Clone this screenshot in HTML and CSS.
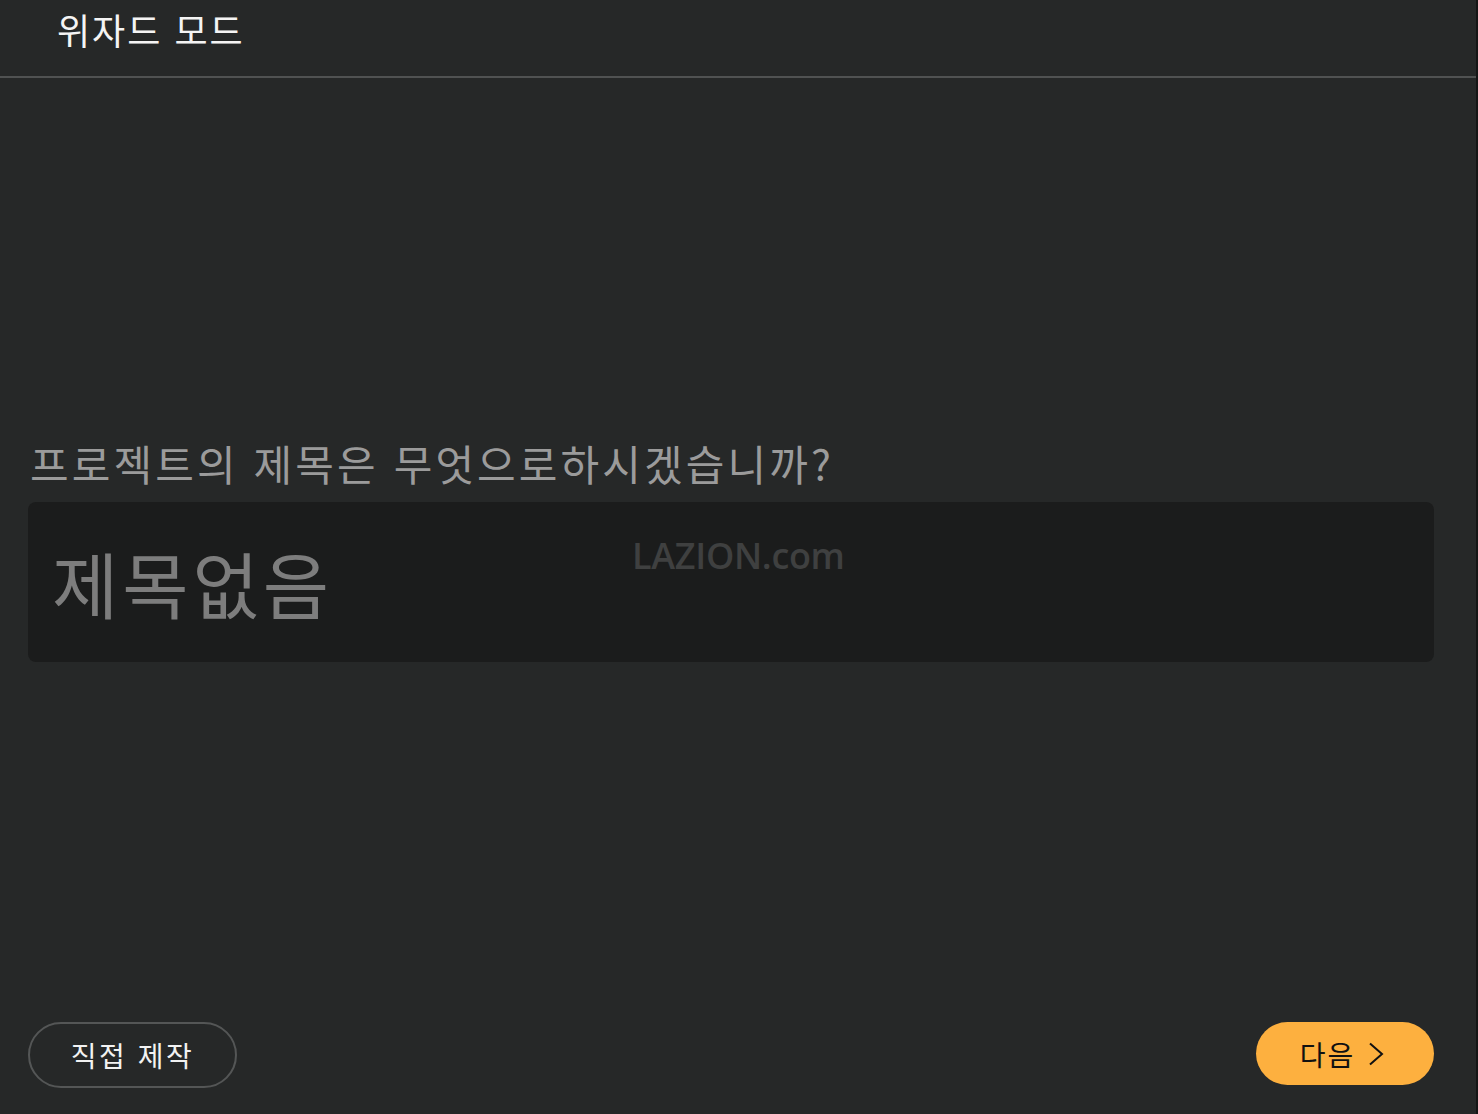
FILE: index.html
```html
<!DOCTYPE html>
<html lang="ko">
<head>
<meta charset="utf-8">
<title>위자드 모드</title>
<link rel="stylesheet" href="styles.css">
</head>
<body>
<div class="app">
  <header class="header">
    <h1 class="title">위자드 모드</h1>
  </header>
  <main class="main">
    <label class="question" for="project-title">프로젝트의 제목은 무엇으로하시겠습니까?</label>
    <div class="field">
      <span class="field-text" id="project-title">제목없음</span>
      <span class="watermark">LAZION<span class="wm-dot">.</span>com</span>
    </div>
  </main>
  <footer class="footer">
    <button class="btn btn-outline">직접 제작</button>
    <button class="btn btn-primary">다음
      <svg class="chev" width="16" height="24" viewBox="0 0 16 24"><path d="M2 1.5 L14 12 L2 22.5" fill="none" stroke="#111" stroke-width="2"/></svg>
    </button>
  </footer>
</div>
</body>
</html>
```
FILE: styles.css
```css
html, body {
  margin: 0;
  padding: 0;
  background: #262828;
  height: 100%;
}
body {
  font-family: "Noto Sans CJK KR", "Noto Sans", sans-serif;
  overflow: hidden;
}
.app {
  height: 1114px;
  width: 1478px;
  display: flex;
  flex-direction: column;
  border-right: 2px solid #151616;
  box-sizing: border-box;
}
.header {
  height: 76px;
  border-bottom: 2px solid #505252;
  box-sizing: content-box;
  padding-left: 57px;
  display: flex;
  align-items: flex-start;
}
.title {
  margin: 0;
  margin-top: 5px;
  font-size: 36px;
  font-weight: 400;
  color: #f4f4f4;
  line-height: 48px;
  letter-spacing: 2px;
}
.main {
  flex: 1;
  display: flex;
  flex-direction: column;
  padding: 0 42px 0 28px;
  padding-top: 355px;
}
.question {
  font-size: 42px;
  color: #9b9b9b;
  line-height: 60px;
  margin-left: 2px;
  margin-bottom: 9px;
  letter-spacing: 3.1px;
}
.field {
  position: relative;
  height: 160px;
  background: #1b1c1c;
  border-radius: 8px;
  display: flex;
  align-items: flex-start;
  padding-left: 24px;
}
.field-text {
  font-size: 72px;
  color: #7d7d7d;
  line-height: 84px;
  margin-top: 38px;
  letter-spacing: 4px;
}
.watermark {
  position: absolute;
  left: 604px;
  top: 29px;
  font-family: "Open Sans", "Noto Sans", sans-serif;
  font-weight: 600;
  font-size: 36px;
  color: #3f4040;
  letter-spacing: -0.3px;
}
.footer {
  display: flex;
  justify-content: space-between;
  align-items: flex-start;
  padding: 0 42px 26px 28px;
}
.btn {
  font-family: "Noto Sans CJK KR", "Noto Sans", sans-serif;
  border-radius: 34px;
  cursor: pointer;
  display: flex;
  align-items: center;
  justify-content: center;
}
.btn-outline {
  width: 209px;
  height: 66px;
  background: transparent;
  border: 2px solid #545656;
  color: #f2f2f2;
  font-size: 28px;
  letter-spacing: 2.5px;
}
.btn-primary {
  width: 178px;
  height: 63px;
  background: #fdb03f;
  border: none;
  color: #111;
  font-size: 28px;
  letter-spacing: 2px;
  gap: 13px;
  padding-left: 0;
}
.chev {
  display: block;
}
```
